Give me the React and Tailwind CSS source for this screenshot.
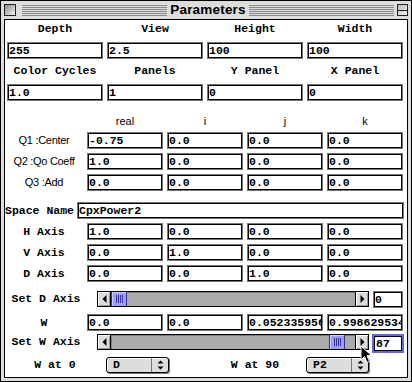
import React from 'react'

const mono = "font-['Liberation_Mono',monospace]"
const sans = "font-['Liberation_Sans',Arial,sans-serif]"

function Field({ value, className = '' }) {
  return (
    <div className={`h-[17px] border border-[#777] shadow-[inset_0_0_0_1px_#000] bg-white overflow-hidden whitespace-nowrap pl-[1px] text-[11.5px] leading-[15px] font-bold text-black ${mono} ${className}`}>
      {value}
    </div>
  )
}

function Label({ children, className = '' }) {
  return <div className={`text-[11.5px] font-bold text-black whitespace-nowrap ${mono} ${className}`}>{children}</div>
}

function Arrow({ dir }) {
  return (
    <div className={`w-[13px] h-full flex items-center justify-center bg-[#dddddd] shadow-[inset_1px_1px_0_#fff,inset_-1px_-1px_0_#999] ${dir === 'left' ? 'border-r' : 'border-l'} border-black`}>
      <svg width="5" height="8" viewBox="0 0 5 8">
        {dir === 'left'
          ? <path d="M4.5 0 L4.5 8 L0.5 4 Z" fill="#000" />
          : <path d="M0.5 0 L0.5 8 L4.5 4 Z" fill="#000" />}
      </svg>
    </div>
  )
}

function Thumb() {
  return (
    <div className="w-[16px] h-full shrink-0 border-x border-[#33338a] bg-[#9c9cff] shadow-[inset_1px_1px_0_#ccccff] flex items-center justify-center gap-px">
      {[0, 1, 2, 3].map(i => <div key={i} className="w-px h-[8px] bg-[#33339a]" />)}
    </div>
  )
}

function Scrollbar({ value, max }) {
  // track is 242px, thumb 16px
  const offset = Math.round((value / max) * 226)
  return (
    <div className="flex h-[16px] w-[272px] shrink-0 border border-black bg-[#aaaaaa]">
      <Arrow dir="left" />
      <div className="flex-1 flex shadow-[inset_1px_1px_0_#7d7d7d]">
        <div className="shrink-0" style={{ width: offset }} />
        <Thumb />
      </div>
      <Arrow dir="right" />
    </div>
  )
}

function Popup({ value }) {
  return (
    <div className={`ml-px w-[63px] h-[16px] flex rounded-[3px] border border-black bg-[#dddddd] shadow-[1px_1px_0_#777,inset_1px_1px_0_#fff]`}>
      <div className={`flex-1 pl-[6px] text-[11.5px] leading-[14px] font-bold ${mono}`}>{value}</div>
      <div className="w-[17px] border-l border-[#777] flex items-center justify-center">
        <svg width="7" height="10" viewBox="0 0 7 10">
          <path d="M3.5 0.5 L6.5 3.5 L0.5 3.5 Z M0.5 6.5 L6.5 6.5 L3.5 9.5 Z" fill="#000" />
        </svg>
      </div>
    </div>
  )
}

function Stripes() {
  return (
    <div className="flex-1 self-start mt-[4px] flex flex-col gap-px">
      {[0, 1, 2, 3, 4, 5].map(i => <div key={i} className="h-px bg-[#8a8a8a]" />)}
    </div>
  )
}

const topFields = [
  ['Depth', '255'], ['View', '2.5'], ['Height', '100'], ['Width', '100'],
]
const secondFields = [
  ['Color Cycles', '1.0'], ['Panels', '1'], ['Y Panel', '0'], ['X Panel', '0'],
]
const quats = [
  ['Q1 :Center', ['-0.75', '0.0', '0.0', '0.0']],
  ['Q2 :Qo Coeff', ['1.0', '0.0', '0.0', '0.0']],
  ['Q3 :Add', ['0.0', '0.0', '0.0', '0.0']],
]
const axes = [
  ['H Axis', ['1.0', '0.0', '0.0', '0.0']],
  ['V Axis', ['0.0', '1.0', '0.0', '0.0']],
  ['D Axis', ['0.0', '0.0', '1.0', '0.0']],
]

export default function App() {
  return (
    <div className="relative w-[412px] h-[382px] bg-[#dddddd] border border-black flex flex-col px-[3px] pb-[3px] overflow-hidden">
      {/* Title bar */}
      <div className="h-[18px] flex items-start shrink-0">
        <div className="mt-[3px] w-[12px] h-[12px] border border-[#222] bg-gradient-to-br from-[#8c8c8c] to-[#f4f4f4]" />
        <div className="w-[6px]" />
        <Stripes />
        <div className={`px-[3px] text-[13.5px] leading-[18px] font-bold tracking-[0.2px] text-black ${sans}`}>Parameters</div>
        <Stripes />
        <div className="w-[3px]" />
        <div className="mt-[3px] w-[11px] h-[12px] border border-[#222] bg-gradient-to-br from-[#bbb] to-[#f4f4f4] flex flex-col justify-center">
          <div className="h-px bg-[#222]" />
        </div>
      </div>

      {/* Content */}
      <div className="flex-1 border border-black bg-white flex flex-col">
        <div className="grid grid-cols-[repeat(4,96px)] gap-x-[4px] pl-[2px]">
          {topFields.map(([l]) => <Label key={l} className="h-[22px] pt-[2px] leading-[14px] text-center">{l}</Label>)}
          {topFields.map(([l, v]) => <Field key={l} value={v} />)}
          {secondFields.map(([l]) => <Label key={l} className="h-[25px] pt-[5px] leading-[14px] text-center">{l}</Label>)}
          {secondFields.map(([l, v]) => <Field key={l} value={v} />)}
        </div>

        <div className={`grid grid-cols-[78px_repeat(4,76px)] gap-x-[4px] h-[31px] pt-[13px] text-[11px] leading-[14px] text-black ${sans}`}>
          <div />
          {['real', 'i', 'j', 'k'].map(h => <div key={h} className="text-center">{h}</div>)}
        </div>

        <div className="grid grid-cols-[78px_repeat(4,76px)] gap-x-[4px] gap-y-[4px]">
          {quats.map(([l, vals]) => (
            <React.Fragment key={l}>
              <div className={`text-center text-[11px] leading-[17px] tracking-[-0.3px] whitespace-nowrap ${sans}`}>{l}</div>
              {vals.map((v, i) => <Field key={i} value={v} />)}
            </React.Fragment>
          ))}
        </div>

        <div className="flex mt-[11px] mr-[3px]">
          <Label className="w-[72px] leading-[17px]">Space Name</Label>
          <Field value="CpxPower2" className="flex-1" />
        </div>

        <div className="grid grid-cols-[78px_repeat(4,76px)] gap-x-[4px] gap-y-[4px] mt-[4px]">
          {axes.map(([l, vals]) => (
            <React.Fragment key={l}>
              <Label className="text-center leading-[17px]">{l}</Label>
              {vals.map((v, i) => <Field key={i} value={v} />)}
            </React.Fragment>
          ))}
        </div>

        <div className="flex items-start mt-[9px]">
          <Label className="w-[82px] text-center leading-[16px]">Set D Axis</Label>
          <div className="ml-[10px]"><Scrollbar value={0} max={90} /></div>
          <Field value="0" className="ml-[4px] w-[30px] h-[16px] leading-[14px]" />
        </div>

        <div className="grid grid-cols-[78px_repeat(4,76px)] gap-x-[4px] mt-[6px]">
          <Label className="text-center leading-[17px]">W</Label>
          {['0.0', '0.0', '0.052335956', '0.998629534'].map((v, i) => <Field key={i} value={v} />)}
        </div>

        <div className="flex items-start mt-[3px]">
          <Label className="w-[82px] text-center leading-[16px]">Set W Axis</Label>
          <div className="ml-[10px]"><Scrollbar value={87} max={90} /></div>
          <div className={`ml-[3px] w-[32px] h-[19px] border-2 border-[#6767d4] shadow-[inset_0_0_0_1px_#000] bg-white pl-[2px] text-[11.5px] leading-[15px] font-bold ${mono}`}>87</div>
        </div>

        <div className="grid grid-cols-[repeat(4,100px)] items-center mt-[4px]">
          <Label className="text-center leading-[16px]">W at 0</Label>
          <Popup value="D" />
          <Label className="text-center leading-[16px]">W at 90</Label>
          <Popup value="P2" />
        </div>
      </div>

      {/* mouse pointer */}
      <svg className="absolute left-[359px] top-[344px]" width="13" height="19" viewBox="0 0 13 19">
        <path d="M1 1 L1 15 L4.5 11.5 L7 17.5 L9.5 16.5 L7 10.5 L11.5 10.5 Z" fill="#000" stroke="#fff" strokeWidth="1" strokeLinejoin="miter" />
      </svg>
    </div>
  )
}
